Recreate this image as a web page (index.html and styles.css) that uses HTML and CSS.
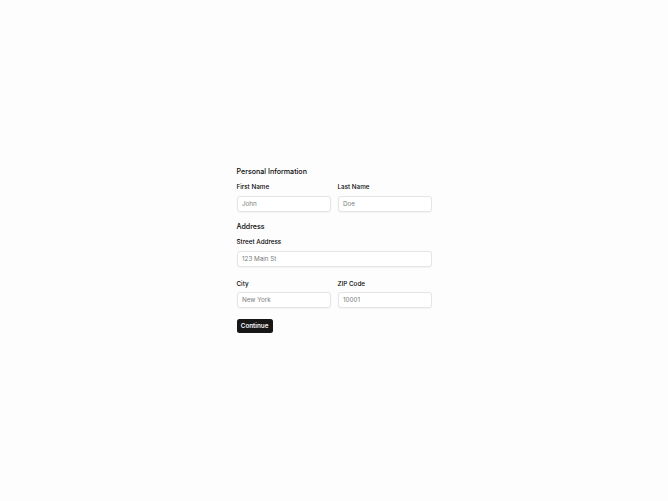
FILE: index.html
```html
<!DOCTYPE html>
<html lang="en">
<head>
<meta charset="utf-8">
<title>Form</title>
<link rel="stylesheet" href="styles.css">
</head>
<body>
<main class="page">
  <form class="form">
    <section class="section">
      <h2 class="section-title">Personal Information</h2>
      <div class="row row-first">
        <div class="field">
          <label class="label">First Name</label>
          <input class="input" type="text" placeholder="John">
        </div>
        <div class="field">
          <label class="label">Last Name</label>
          <input class="input" type="text" placeholder="Doe">
        </div>
      </div>
    </section>
    <section class="section section-address">
      <h2 class="section-title">Address</h2>
      <div class="field field-street">
        <label class="label">Street Address</label>
        <input class="input" type="text" placeholder="123 Main St">
      </div>
      <div class="row row-city">
        <div class="field">
          <label class="label">City</label>
          <input class="input" type="text" placeholder="New York">
        </div>
        <div class="field">
          <label class="label">ZIP Code</label>
          <input class="input" type="text" placeholder="10001">
        </div>
      </div>
    </section>
    <div class="actions">
      <button class="button" type="button">Continue</button>
    </div>
  </form>
</main>
</body>
</html>
```
FILE: styles.css
```css
* { box-sizing: border-box; }
html, body { margin: 0; padding: 0; }
body {
  background: #fdfdfd;
  font-family: Inter, "Liberation Sans", sans-serif;
  color: #0a0a0a;
}
.page {
  min-height: 100vh;
  display: flex;
  align-items: center;
  justify-content: center;
  padding-bottom: 2px;
}
.form {
  width: 195px;
  display: flex;
  flex-direction: column;
}
.section { display: flex; flex-direction: column; }
.section-title {
  margin: 0;
  font-size: 7.1px;
  line-height: 12px;
  font-weight: 500;
  color: #0a0a0a;
}
.section-address { margin-top: 9.5px; }
.row {
  display: grid;
  grid-template-columns: 1fr 1fr;
  gap: 7px;
}
.row-first { margin-top: 4.5px; }
.row-city { margin-top: 12px; }
.field-street { margin-top: 4px; }
.field { display: flex; flex-direction: column; }
.label {
  font-size: 6.3px;
  line-height: 10px;
  font-weight: 500;
  color: #0a0a0a;
}
.input {
  margin-top: 3.5px;
  height: 16px;
  width: 100%;
  border: 1px solid #e5e5e5;
  border-radius: 3px;
  background: #ffffff;
  box-shadow: 0 0.5px 1px rgba(0,0,0,0.04);
  padding: 0 4.5px;
  font-family: Inter, "Liberation Sans", sans-serif;
  font-size: 6.3px;
  color: #0a0a0a;
  outline: none;
}
.input::placeholder { color: #7a7a7a; }
.actions { margin-top: 10.5px; display: flex; }
.button {
  height: 14.5px;
  padding: 0 4.3px;
  border: none;
  border-radius: 2.5px;
  background: #171717;
  color: #fafafa;
  font-family: Inter, "Liberation Sans", sans-serif;
  font-size: 6.3px;
  font-weight: 600;
  line-height: 14.5px;
  cursor: pointer;
}
```
